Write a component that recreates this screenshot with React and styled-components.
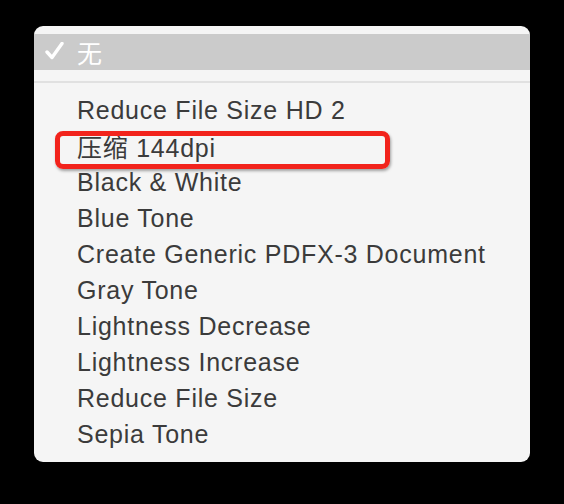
import React from "react";
import styled, { createGlobalStyle } from "styled-components";

const Global = createGlobalStyle`
  html, body { margin: 0; padding: 0; background: #000; }
  body { width: 564px; height: 504px; overflow: hidden; }
`;

const Page = styled.div`
  width: 564px;
  height: 504px;
  background: #000;
  padding: 26px 34px 0 34px;
  box-sizing: border-box;
`;

const Menu = styled.div`
  width: 496px;
  background: #f5f5f5;
  border-radius: 9px;
  padding: 8px 0 10px;
  box-sizing: border-box;
  font-family: "Liberation Sans", "Noto Sans CJK SC", sans-serif;
  color: #3b3b3b;
`;

const Row = styled.div`
  position: relative;
  height: 36px;
  display: flex;
  align-items: center;
  padding-left: 43px;
  font-size: 25px;
  letter-spacing: 0.75px;
  white-space: nowrap;
  background: ${(p) => (p.$selected ? "#cbcbcb" : "transparent")};
  color: ${(p) => (p.$selected ? "#fff" : "#3b3b3b")};
`;

const Check = styled.svg`
  position: absolute;
  left: 11px;
  top: 8px;
`;

const Separator = styled.div`
  height: 2px;
  background: #e1e1e1;
  margin: 11px 0 9px;
`;

const Highlight = styled.div`
  position: absolute;
  left: 21px;
  top: 3px;
  width: 335px;
  height: 38px;
  border: 5px solid #f2231c;
  border-radius: 8px;
  box-sizing: border-box;
  box-shadow: 1px 2px 3px rgba(0, 0, 0, 0.35);
`;

const items = [
  "Reduce File Size HD 2",
  "压缩 144dpi",
  "Black & White",
  "Blue Tone",
  "Create Generic PDFX-3 Document",
  "Gray Tone",
  "Lightness Decrease",
  "Lightness Increase",
  "Reduce File Size",
  "Sepia Tone",
];

export default function App() {
  return (
    <>
      <Global />
      <Page>
        <Menu>
          <Row $selected>
            <Check width="19" height="18" viewBox="0 0 19 18">
              <path
                d="M2 10 L7 15.5 L17 1.5"
                fill="none"
                stroke="#fff"
                strokeWidth="3.4"
                strokeLinecap="round"
                strokeLinejoin="round"
              />
            </Check>
            无
          </Row>
          <Separator />
          {items.map((t, i) => (
            <Row key={i}>
              {t}
              {i === 1 && <Highlight />}
            </Row>
          ))}
        </Menu>
      </Page>
    </>
  );
}
